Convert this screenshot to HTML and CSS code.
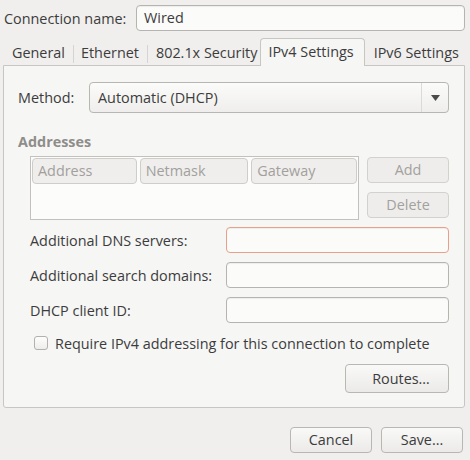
FILE: index.html
```html
<!DOCTYPE html>
<html>
<head>
<meta charset="utf-8">
<link rel="stylesheet" href="styles.css">
</head>
<body>
<div class="name-row">
  <span class="name-label">Connection name:</span>
  <div class="entry name-entry">Wired</div>
</div>
<div class="tabs">
  <div class="tab t-general">General</div>
  <div class="sep"></div>
  <div class="tab t-eth">Ethernet</div>
  <div class="sep"></div>
  <div class="tab t-sec">802.1x Security</div>
  <div class="tab active">IPv4 Settings</div>
  <div class="tab t-v6">IPv6 Settings</div>
</div>
<div class="panel">
  <div class="method-row">
    <span class="method-label">Method:</span>
    <div class="combo">
      <span class="combo-text">Automatic (DHCP)</span>
      <span class="combo-arrow"><svg width="9" height="6" viewBox="0 0 9 6"><path d="M0 0 H9 L4.5 6 Z" fill="#4a4a48"/></svg></span>
    </div>
  </div>
  <div class="section-title">Addresses</div>
  <div class="addr-row">
    <div class="table">
      <div class="thead">
        <div class="th w1">Address</div>
        <div class="th w2">Netmask</div>
        <div class="th w3">Gateway</div>
      </div>
    </div>
    <div class="addr-buttons">
      <div class="btn disabled">Add</div>
      <div class="btn disabled">Delete</div>
    </div>
  </div>
  <div class="form">
    <div class="form-row"><span class="form-label">Additional DNS servers:</span><div class="entry field error"></div></div>
    <div class="form-row"><span class="form-label">Additional search domains:</span><div class="entry field"></div></div>
    <div class="form-row"><span class="form-label">DHCP client ID:</span><div class="entry field"></div></div>
  </div>
  <div class="check-row"><span class="checkbox"></span><span class="check-text">Require IPv4 addressing for this connection to complete</span></div>
  <div class="routes-row"><div class="btn routes">Routes…</div></div>
</div>
<div class="footer">
  <div class="btn foot">Cancel</div>
  <div class="btn foot">Save...</div>
</div>
</body>
</html>
```
FILE: styles.css
```css
html, body { margin: 0; padding: 0; }
body {
  width: 470px;
  height: 460px;
  background: #f0efed;
  font-family: "Open Sans", "DejaVu Sans", sans-serif;
  font-size: 14.4px;
  color: #3c3c3c;
  box-sizing: border-box;
  padding-top: 5px;
  overflow: hidden;
}
.name-row { display: flex; align-items: center; height: 26px; padding-left: 4px; padding-right: 5px; }
.name-label { width: 132px; }
.entry {
  box-sizing: border-box;
  border: 1px solid #b6b4b0;
  border-radius: 4px;
  background: #fbfbfa;
  box-shadow: inset 0 1px 1px rgba(0,0,0,0.06);
}
.name-entry { flex: 1; height: 26px; padding-left: 7px; line-height: 24px; }

.tabs { display: flex; align-items: flex-end; height: 27px; margin-top: 8px; padding-left: 3px; position: relative; z-index: 1; }
.tab { height: 26px; line-height: 25px; box-sizing: border-box; white-space: nowrap; }
.t-general { padding-left: 9px; padding-right: 8px; }
.t-eth { padding-left: 7px; padding-right: 8px; }
.t-sec { padding-left: 8px; padding-right: 3px; }
.sep { width: 1px; height: 18px; background: #d6d4d1; align-self: center; margin-top: 2px; }
.tab.active {
  height: 28px;
  line-height: 26px;
  border: 1px solid #c8c6c2;
  border-bottom: none;
  border-radius: 4px 4px 0 0;
  background: #f6f6f5;
  padding: 0 10px 0 7px;
}
.t-v6 { padding-left: 9px; }

.panel {
  box-sizing: border-box;
  margin: -1px 5px 0 3px;
  height: 343px;
  border: 1px solid #c8c6c2;
  border-radius: 0 0 3px 3px;
  background: #f6f6f5;
  padding: 16px 15px 0 14px;
}
.method-row { display: flex; align-items: center; height: 31px; }
.method-label { width: 71px; }
.combo {
  flex: 1;
  height: 31px;
  box-sizing: border-box;
  border: 1px solid #b8b6b2;
  border-radius: 4px;
  background: linear-gradient(#fbfbfa, #efeeec);
  display: flex;
  align-items: center;
}
.combo-text { flex: 1; padding-left: 8px; }
.combo-arrow { width: 26px; height: 100%; border-left: 1px solid #dcdad7; display: flex; align-items: center; justify-content: center; }

.section-title { font-weight: bold; color: #8f8d8a; margin-top: 19px; height: 20px; line-height: 20px; }
.addr-row { display: flex; margin-top: 4px; padding-left: 12px; }
.table {
  width: 329px;
  height: 64px;
  box-sizing: border-box;
  border: 1px solid #c3c1bd;
  background: #fcfcfb;
  padding: 1px;
}
.thead { display: flex; gap: 3px; }
.th {
  height: 26px;
  box-sizing: border-box;
  border: 1px solid #cfcdca;
  border-radius: 4px;
  background: #efeeec;
  color: #a2a09d;
  line-height: 24px;
  padding-left: 5px;
}
.w1 { width: 105px; }
.w2 { width: 109px; }
.w3 { width: 106px; }
.addr-buttons { display: flex; flex-direction: column; gap: 9px; margin-left: 8px; width: 82px; padding-top: 1px; }
.btn {
  box-sizing: border-box;
  height: 26px;
  flex: none;
  border: 1px solid #b9b7b3;
  border-radius: 4px;
  background: linear-gradient(#f9f9f8, #ebeae8);
  text-align: center;
  line-height: 24px;
}
.btn.disabled { color: #a3a19e; border-color: #d3d1ce; background: #eeedeb; }

.form { margin-top: 7px; padding-left: 12px; display: flex; flex-direction: column; gap: 9px; }
.form-row { display: flex; align-items: center; height: 26px; }
.form-label { width: 196px; }
.field { width: 223px; height: 26px; }
.field.error { border-color: #e9a08a; }

.check-row { display: flex; align-items: center; margin-top: 9px; padding-left: 16px; height: 22px; }
.checkbox {
  width: 14px; height: 14px; box-sizing: border-box;
  border: 1px solid #b3b1ad; border-radius: 3px;
  background: linear-gradient(#fdfdfd, #eeedeb);
  margin-right: 7px;
}
.routes-row { display: flex; justify-content: flex-end; margin-top: 10px; }
.routes { width: 104px; height: 29px; line-height: 27px; padding-left: 8px; }

.footer { display: flex; justify-content: flex-end; gap: 9px; margin-top: 19px; padding-right: 7px; }
.foot { width: 82px; height: 26px; }
```
